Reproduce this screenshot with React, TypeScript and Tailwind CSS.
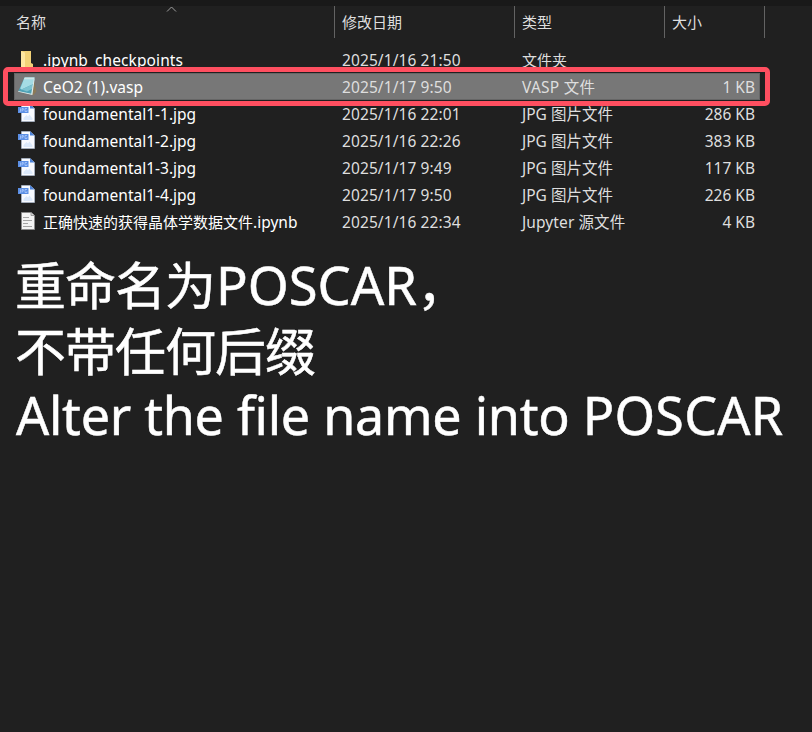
type IconKind = "folder" | "notepad" | "jpg" | "page";

interface FileRow {
  icon: IconKind;
  name: string;
  cjkName?: string;
  nameClass: string;
  date: string;
  type: string;
  typeClass?: string;
  size: string;
  selected?: boolean;
}

const files: FileRow[] = [
  { icon: "folder", name: ".ipynb_checkpoints", nameClass: "tracking-[0.1px]", date: "2025/1/16 21:50", type: "文件夹", typeClass: "text-[15px]", size: "" },
  { icon: "notepad", name: "CeO2 (1).vasp", nameClass: "tracking-[0.06px]", date: "2025/1/17 9:50", type: "VASP 文件", typeClass: "tracking-[0.25px]", size: "1 KB", selected: true },
  { icon: "jpg", name: "foundamental1-1.jpg", nameClass: "", date: "2025/1/16 22:01", type: "JPG 图片文件", size: "286 KB" },
  { icon: "jpg", name: "foundamental1-2.jpg", nameClass: "", date: "2025/1/16 22:26", type: "JPG 图片文件", size: "383 KB" },
  { icon: "jpg", name: "foundamental1-3.jpg", nameClass: "", date: "2025/1/17 9:49", type: "JPG 图片文件", size: "117 KB" },
  { icon: "jpg", name: "foundamental1-4.jpg", nameClass: "", date: "2025/1/17 9:50", type: "JPG 图片文件", size: "226 KB" },
  { icon: "page", cjkName: "正确快速的获得晶体学数据文件", name: ".ipynb", nameClass: "", date: "2025/1/16 22:34", type: "Jupyter 源文件", typeClass: "tracking-[0.1px]", size: "4 KB" },
];

function FileIcon({ kind }: { kind: IconKind }) {
  return (
    <svg className="-mt-[3px] block h-5 w-5" viewBox="0 0 20 20">
      {kind === "folder" && (
        <>
          <path d="M3 2h9l1 1v15H3z" fill="#f0cd6c" />
          <path d="M7 2h6v12l2 1v3H7z" fill="#f3d277" />
          <path d="M3 2l4 1.500V18H3z" fill="#ffe7a0" />
        </>
      )}
      {kind === "notepad" && (
        <>
          <path d="M15.500 2.500l2.900 13-3 3.700-2-1z" fill="#8c7a58" />
          <path d="M6.500 1.500h10l-2.500 17L.2 15.200z" fill="#4fa2b6" />
          <path d="M6.500 1.500h10l-1 6.500-12 5.500-1.300-1z" fill="#a5dce4" />
          <path d="M3.500 13.500L15.500 8l-.6 4.500L9 15.500z" fill="#7dc3d0" />
          <path d="M6.800 1.500h9.700l-.3 1.700H6z" fill="#d2e5e6" />
          <path d="M.2 15l13 2.700L15.700 3.500l.9-.5-2.200 16L.2 15.800z" fill="#e0ebe9" />
        </>
      )}
      {kind === "jpg" && (
        <>
          <path d="M3.500 1.500H12l4.500 4v13h-13z" fill="#f8faff" stroke="#b5c3d8" strokeWidth=".6" />
          <path d="M12 1.200l4.500 4.300H12z" fill="#4b82d9" />
          <path d="M5.500 17v-2l3-3 1.500 1.500 1.500-2 3 4V17z" fill="#dce9fb" />
          <rect x="0" y="4" width="10.500" height="6" fill="#5b8fe5" />
          <path d="M2.500 5.500v3H1.700M4 8.500v-3h1.300v1.600H4M9 5.500H7v3h2V7.200" stroke="#b9d2ff" strokeWidth=".7" fill="none" />
        </>
      )}
      {kind === "page" && (
        <>
          <path d="M3.500 1.500H13l3.500 3v14h-13z" fill="#f4f4f4" stroke="#8b8b8b" />
          <path d="M13 1.500v3h3.500" fill="#d8d8d8" stroke="#8b8b8b" strokeWidth=".8" />
          <path d="M5 6.500h6M5 9.500h9M5 12.500h5M5 15.500h9" stroke="#a5a5a5" />
        </>
      )}
    </svg>
  );
}

function Row({ file }: { file: FileRow }) {
  return (
    <div
      className={`ml-[14px] flex h-[27px] w-[746px] items-center pt-[2px] leading-[25px] ${
        file.selected ? "bg-[#777777] outline outline-1 -outline-offset-1 outline-[#666666]" : ""
      }`}
    >
      <div className="flex w-[328px] items-center whitespace-pre pl-[4px] text-white">
        <FileIcon kind={file.icon} />
        <span className={`ml-[5px] ${file.nameClass}`}>
          {file.cjkName && <span className="text-[15px]">{file.cjkName}</span>}
          {file.name}
        </span>
      </div>
      <div className="w-[180px] tracking-[0.1px] text-[#dedede]">{file.date}</div>
      <div className={`w-[150px] text-[#dedede] ${file.typeClass ?? ""}`}>{file.type}</div>
      <div className="w-[83px] text-right text-[#dedede]">{file.size}</div>
    </div>
  );
}

export default function App() {
  return (
    <div className="relative h-[732px] w-[812px] overflow-hidden border-t-[6px] border-[#191919] bg-[#202020] font-['Noto_Sans','Noto_Sans_CJK_SC',sans-serif] text-[15.5px]">
      <header className="flex h-8 items-center text-[15px] text-[#dedede]">
        <div className="flex h-8 w-[335px] items-center border-r border-[#636363] pl-4">名称</div>
        <div className="flex h-8 w-[180px] items-center border-r border-[#636363] pl-[7px]">修改日期</div>
        <div className="flex h-8 w-[150px] items-center border-r border-[#636363] pl-[7px]">类型</div>
        <div className="flex h-8 w-[100px] items-center border-r border-[#636363] pl-[7px]">大小</div>
      </header>
      <svg className="absolute left-[166px] top-0 h-[7px] w-[11px]" viewBox="0 0 11 7" fill="none" stroke="#a0a0a0">
        <path d="M1 5.500l4.500-4.500L10 5.500" />
      </svg>

      <main className="pt-[8px]">
        {files.map((file) => (
          <Row key={file.date + file.name} file={file} />
        ))}
      </main>
      <div className="absolute left-[3px] top-[61px] h-[39px] w-[767px] rounded-[5px] border-[5px] border-[#ff4f60]" />

      <section className="ml-[15px] mt-[17px] whitespace-pre text-[51px] leading-[66px] tracking-[-1px] text-white [-webkit-text-stroke:0.5px_white]">
        <p className="h-[66px]">
          重命名为<span className="ml-px text-[52.5px] tracking-[0px]">POSCAR</span>，
        </p>
        <p className="h-[66px]">不带任何后缀</p>
        <p className="ml-px h-[62px] text-[52px] leading-[62px] tracking-[-0.26px]">
          Alter the file name into <span className="tracking-[0.3px]">POSCAR</span>
        </p>
      </section>
    </div>
  );
}
